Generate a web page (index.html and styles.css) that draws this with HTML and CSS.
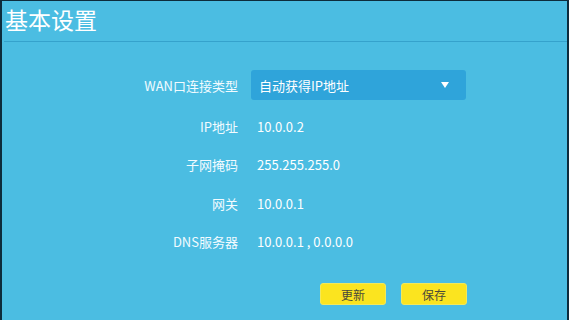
FILE: index.html
```html
<!DOCTYPE html>
<html lang="zh-CN">
<head>
  <meta charset="UTF-8" />
  <meta name="viewport" content="width=device-width, initial-scale=1.0" />
  <title>基本设置</title>
  <link rel="stylesheet" href="styles.css">
</head>
<body>
  <div class="page">
    <h1 class="title">基本设置</h1>

    <div class="form">
      <div class="row row-select">
        <label class="label">WAN口连接类型</label>
        <div class="select">
          <span>自动获得IP地址</span>
          <span class="arrow"></span>
        </div>
      </div>
      <div class="row">
        <label class="label">IP地址</label>
        <span class="value">10.0.0.2</span>
      </div>
      <div class="row">
        <label class="label">子网掩码</label>
        <span class="value">255.255.255.0</span>
      </div>
      <div class="row">
        <label class="label">网关</label>
        <span class="value">10.0.0.1</span>
      </div>
      <div class="row">
        <label class="label">DNS服务器</label>
        <span class="value">10.0.0.1 , 0.0.0.0</span>
      </div>
      <div class="row row-buttons">
        <span></span>
        <div class="buttons">
          <button class="btn">更新</button>
          <button class="btn">保存</button>
        </div>
      </div>
    </div>
  </div>
</body>
</html>
```

FILE: styles.css
```css
:root {
  --bg: #4bbde2;
  --line: #35a2cc;
  --select-bg: #2fa4da;
  --edge: #0d2c3c;
  --yellow: #fbe41f;
}

* {
  box-sizing: border-box;
  margin: 0;
  padding: 0;
}

body {
  font-family: "Noto Sans CJK SC", "Noto Sans", sans-serif;
  background: var(--bg);
  color: #fff;
}

.page {
  height: 320px;
  background: var(--bg);
  border-left: 2px solid var(--edge);
  border-right: 2px solid var(--edge);
  border-top: 1px solid var(--edge);
}

.title {
  font-size: 23px;
  font-weight: normal;
  line-height: 34px;
  height: 41px;
  padding: 1px 0 0 1px;
  margin-left: 2px;
  border-bottom: 1px solid var(--line);
}

.form {
  padding-top: 28px;
}

.row {
  display: grid;
  grid-template-columns: 236px 215px;
  column-gap: 13px;
  align-items: center;
  height: 38.5px;
  font-size: 13px;
}

.row-select {
  height: 30px;
  margin-bottom: 7px;
}

.label {
  text-align: right;
  color: #f2fbff;
}

.value {
  padding-left: 6px;
}

.select {
  height: 30px;
  background: var(--select-bg);
  border-radius: 3px;
  display: flex;
  align-items: center;
  justify-content: space-between;
  padding: 0 17px 0 8px;
}

.arrow {
  width: 0;
  height: 0;
  border-left: 4px solid transparent;
  border-right: 4px solid transparent;
  border-top: 6px solid #fff;
}

.row-buttons {
  margin-top: 22px;
  height: 22px;
}

.buttons {
  display: flex;
  justify-content: flex-end;
  gap: 15px;
  margin-right: -1px;
}

.btn {
  width: 66px;
  height: 22px;
  background: var(--yellow);
  border: 1px solid #f3e85a;
  border-radius: 3px;
  font-family: inherit;
  font-size: 12px;
  color: #4a4a3a;
  cursor: pointer;
}
```
